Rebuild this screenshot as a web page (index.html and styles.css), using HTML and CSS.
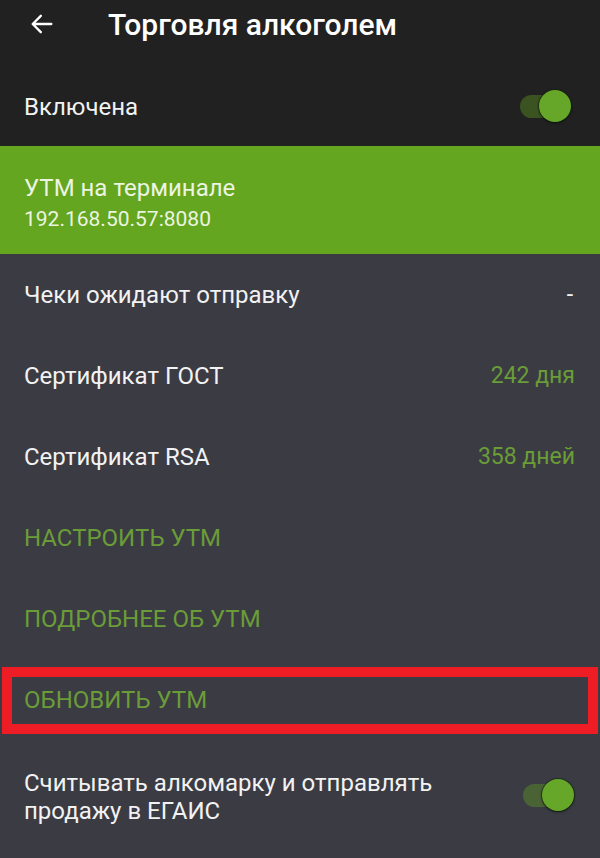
FILE: index.html
```html
<!DOCTYPE html>
<html lang="ru">
<head>
<meta charset="utf-8">
<title>Торговля алкоголем</title>
<link rel="stylesheet" href="styles.css">
</head>
<body>
<div class="screen">
  <header class="top">
    <div class="toolbar">
      <svg class="back" width="28" height="28" viewBox="0 0 24 24"><path d="M20 12H4.5M11 5l-7 7 7 7" fill="none" stroke="#fff" stroke-width="2" stroke-linecap="round" stroke-linejoin="round"/></svg>
      <h1 class="title">Торговля алкоголем</h1>
    </div>
    <div class="row switch-row dark">
      <span class="label">Включена</span>
      <span class="toggle"><span class="track"></span><span class="thumb"></span></span>
    </div>
  </header>
  <section class="band">
    <div class="band-title">УТМ на терминале</div>
    <div class="band-sub">192.168.50.57:8080</div>
  </section>
  <main class="list">
    <div class="row"><span class="label">Чеки ожидают отправку</span><span class="value plain">-</span></div>
    <div class="row"><span class="label">Сертификат ГОСТ</span><span class="value">242 дня</span></div>
    <div class="row"><span class="label">Сертификат RSA</span><span class="value">358 дней</span></div>
    <div class="row"><span class="action">НАСТРОИТЬ УТМ</span></div>
    <div class="row"><span class="action">ПОДРОБНЕЕ ОБ УТМ</span></div>
    <div class="row highlighted"><span class="action">ОБНОВИТЬ УТМ</span></div>
    <div class="row tall"><span class="label two">Считывать алкомарку и отправлять продажу в ЕГАИС</span>
      <span class="toggle"><span class="track"></span><span class="thumb"></span></span>
    </div>
  </main>
</div>
</body>
</html>
```
FILE: styles.css
```css
* { box-sizing: border-box; }
html, body { margin: 0; padding: 0; }
body {
  width: 600px;
  height: 858px;
  overflow: hidden;
  background: #3b3b43;
  font-family: Roboto, "Noto Sans", sans-serif;
  color: #f4f4f4;
}
.screen { width: 600px; }
.top { background: #212121; }
.toolbar {
  height: 58px;
  display: flex;
  align-items: center;
  padding-left: 28px;
  padding-bottom: 10px;
}
.back { flex: none; }
.title {
  margin: 0 0 0 52px;
  font-size: 30px;
  font-weight: 500;
  color: #fff;
  letter-spacing: 0;
}
.row {
  height: 81px;
  display: flex;
  align-items: center;
  justify-content: space-between;
  padding: 0 25px 0 24px;
  position: relative;
}
.switch-row { height: 88px; padding-top: 9px; padding-right: 28px; }
.label { font-size: 24px; color: #f2f2f2; }
.value { font-size: 23px; color: #6a9c37; }
.value.plain { color: #f2f2f2; padding-right: 2px; }
.action { font-size: 24px; color: #6a9c37; }
.band {
  background: #64a61f;
  height: 108px;
  padding: 27px 24px 0;
}
.band-title { font-size: 24px; color: #ecf4e2; line-height: 30px; }
.band-sub { font-size: 21px; color: #ecf4e2; line-height: 26px; margin-top: 3px; }
.toggle {
  position: relative;
  width: 52px;
  height: 34px;
  flex: none;
}
.track {
  position: absolute;
  left: 0;
  top: 5px;
  width: 46px;
  height: 23px;
  border-radius: 12px;
  background: rgba(100, 166, 31, 0.38);
}
.thumb {
  position: absolute;
  left: 19px;
  top: 0;
  width: 32px;
  height: 32px;
  border-radius: 50%;
  background: #66a72a;
  box-shadow: 0 1px 3px rgba(0,0,0,0.55), 0 0 0 1px rgba(20,40,10,0.5);
}
.highlighted::after {
  content: "";
  position: absolute;
  left: 2px;
  right: 2px;
  top: 8px;
  bottom: 6px;
  border: 10px solid #ee1c25;
}
.tall { height: 118px; align-items: flex-start; padding-top: 29px; }
.tall .toggle { margin-top: 10px; }
.label.two { line-height: 28px; width: 460px; }
```
